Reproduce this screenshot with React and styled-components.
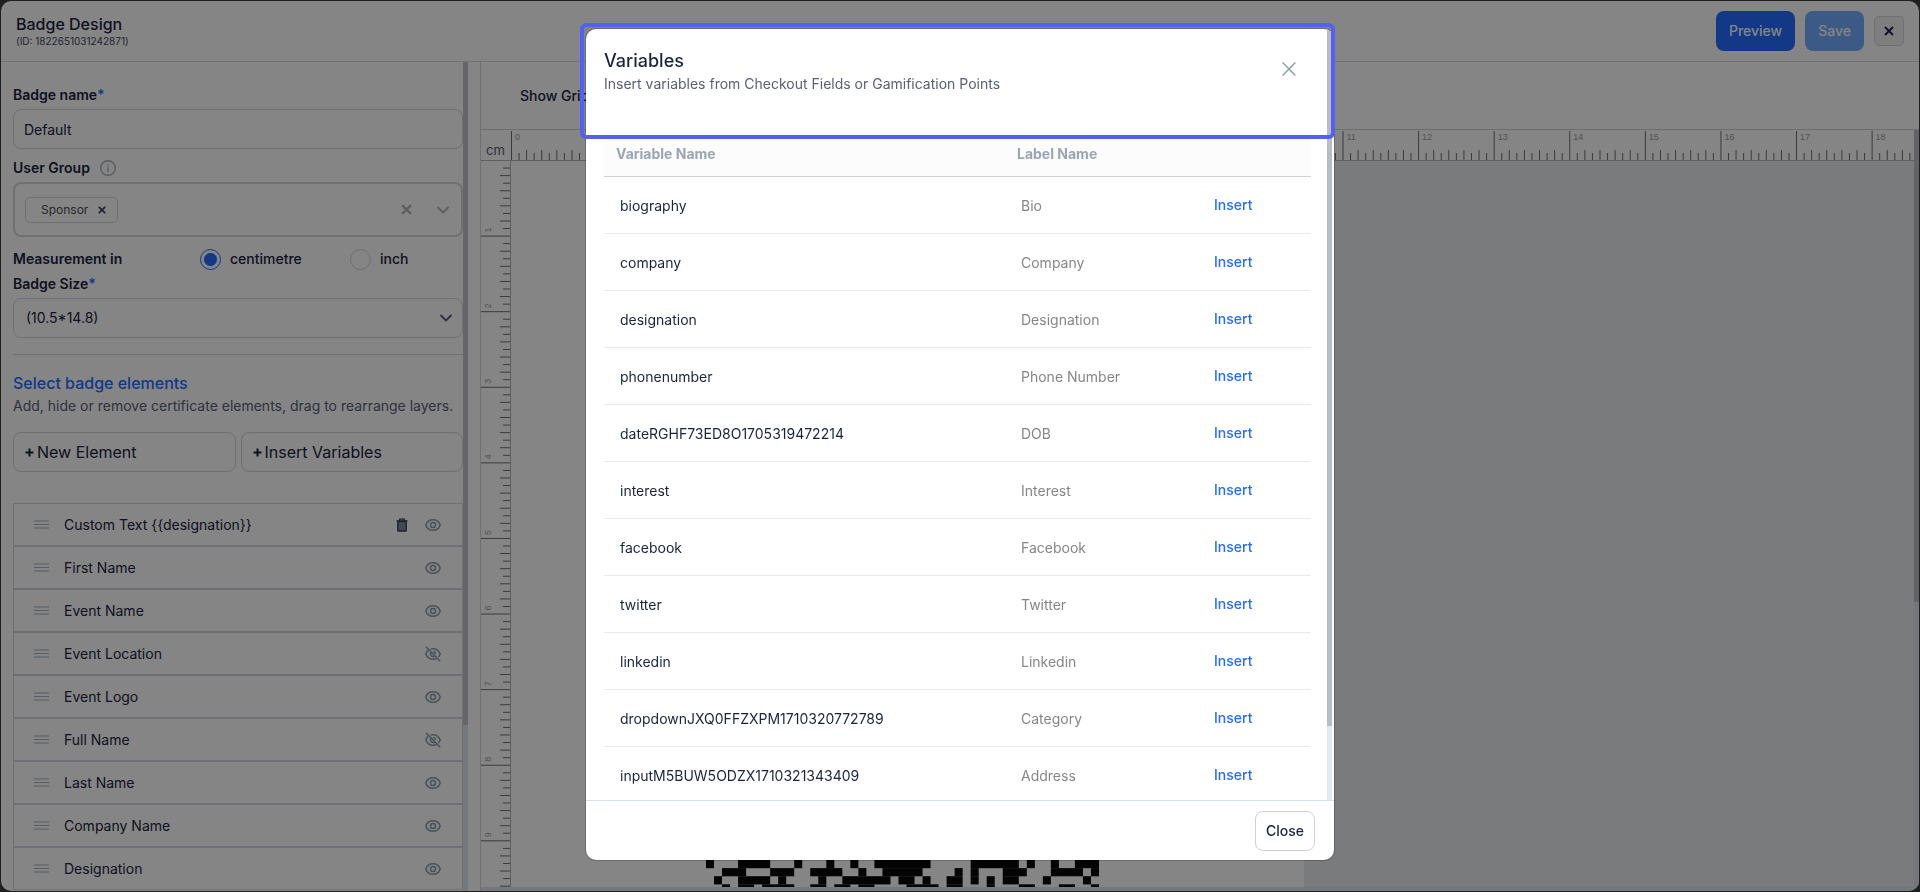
import React from 'react'
import styled, { createGlobalStyle, css } from 'styled-components'

const variables = [
  { name: 'biography', label: 'Bio' },
  { name: 'company', label: 'Company' },
  { name: 'designation', label: 'Designation' },
  { name: 'phonenumber', label: 'Phone Number' },
  { name: 'dateRGHF73ED8O1705319472214', label: 'DOB' },
  { name: 'interest', label: 'Interest' },
  { name: 'facebook', label: 'Facebook' },
  { name: 'twitter', label: 'Twitter' },
  { name: 'linkedin', label: 'Linkedin' },
  { name: 'dropdownJXQ0FFZXPM1710320772789', label: 'Category' },
  { name: 'inputM5BUW5ODZX1710321343409', label: 'Address' },
]

const layers = [
  { name: 'Custom Text {{designation}}', removable: true },
  { name: 'First Name' },
  { name: 'Event Name' },
  { name: 'Event Location', hidden: true },
  { name: 'Event Logo' },
  { name: 'Full Name', hidden: true },
  { name: 'Last Name' },
  { name: 'Company Name' },
  { name: 'Designation' },
]

// one cm on screen
const CM = 75.59

// dark runs of each qr row, as [start, end] in modules
const qrRows = [
  [[0, 1], [4, 8], [11, 12], [15, 16], [18, 19], [21, 28], [33, 39], [40, 41], [43, 44], [46, 49]],
  [[2, 5], [8, 11], [13, 17], [19, 20], [22, 27], [31, 32], [33, 34], [37, 40], [43, 47], [48, 49]],
  [[1, 2], [4, 8], [9, 10], [14, 15], [17, 23], [24, 26], [27, 28], [30, 32], [33, 34], [35, 36], [37, 39], [42, 43], [47, 48]],
  [[2, 3], [4, 6], [7, 11], [13, 15], [16, 18], [19, 21], [25, 29], [30, 32], [35, 36], [39, 41], [44, 46], [48, 49]],
]

const Cross = ({ size = 10, width = 2 }) => (
  <svg width={size} height={size} viewBox="0 0 10 10" fill="none" stroke="currentColor" strokeWidth={width} aria-hidden="true">
    <path d="M1 1L9 9M9 1L1 9" />
  </svg>
)

const Chevron = ({ width = 2 }) => (
  <svg width="14" height="10" viewBox="0 0 14 10" fill="none" stroke="currentColor" strokeWidth={width} strokeLinecap="round" aria-hidden="true">
    <path d="M2 2.5L7 7.5L12 2.5" />
  </svg>
)

const Plus = () => (
  <svg width="9" height="9" viewBox="0 0 9 9" stroke="currentColor" strokeWidth="2" aria-hidden="true">
    <path d="M4.5 0.5V8.5M0.5 4.5H8.5" />
  </svg>
)

const Eye = () => (
  <svg width="16" height="16" viewBox="0 0 16 16" fill="none" stroke="currentColor" strokeWidth="1.5" aria-hidden="true">
    <path d="M0.8 8C1.8 4.700 4.600 2.700 8 2.700S14.200 4.700 15.200 8C14.200 11.300 11.400 13.300 8 13.300S1.800 11.300 0.800 8Z" />
    <circle cx="8" cy="8" r="2.500" />
  </svg>
)

const EyeOff = () => (
  <svg width="16" height="16" viewBox="0 0 16 16" fill="none" stroke="currentColor" strokeWidth="1.5" aria-hidden="true">
    <path d="M1 0.700L15.200 15.200" />
    <path d="M3.300 4.200C2.200 5.100 1.300 6.500 0.800 8C2.100 11.300 4.800 13.300 8 13.300C9.400 13.300 10.600 13 11.700 12.400" />
    <path d="M5.600 3.100C6.300 2.800 7.200 2.700 8 2.700C11.200 2.700 13.900 4.700 15.200 8C14.800 9.200 14.100 10.200 13.300 11" />
    <path d="M6.200 6.200C5.200 7.300 5.400 8.800 6.300 9.700C7.200 10.500 8.600 10.700 9.700 9.800M8.200 5.500C9.500 5.600 10.400 6.500 10.500 7.800" />
  </svg>
)

const Trash = () => (
  <svg width="12" height="14" viewBox="0 0 12 14" fill="none" aria-hidden="true">
    <path d="M0.500 2.800H11.500M3.700 2.500V1.200H8.300V2.500" stroke="#3b4258" strokeWidth="1.300" />
    <path d="M1.800 3.500H10.200V12.200Q10.200 13 9.400 13H2.600Q1.800 13 1.800 12.200Z" fill="#848ca0" stroke="#3b4258" strokeWidth="1.400" />
  </svg>
)

const Handle = () => (
  <svg width="15" height="9" viewBox="0 0 15 9" stroke="#a9b1bf" aria-hidden="true">
    <path d="M0 1H15M0 4.500H15M0 8H15" />
  </svg>
)

const Info = () => (
  <svg width="16" height="16" viewBox="0 0 16 16" fill="none" stroke="#a5b0c0" aria-hidden="true">
    <circle cx="8" cy="8" r="7.300" strokeWidth="1.400" />
    <path d="M8 7V12M8 4V5.500" strokeWidth="1.300" />
  </svg>
)

const HorizontalRuler = () => {
  const ticks = Array.from({ length: 190 }, (_, i) => i)
  return (
    <TopRuler height="30">
      {ticks.map(i => {
        const x = (i * CM) / 10 + 0.5
        const top = i % 10 === 0 ? 1 : i % 2 === 0 ? 20 : 23
        return <line key={i} x1={x} x2={x} y1={top} y2="30" />
      })}
      {ticks.filter(i => i % 10 === 0).map(i => (
        <text key={i} x={(i * CM) / 10 + 4} y="10">{i / 10}</text>
      ))}
    </TopRuler>
  )
}

const VerticalRuler = () => {
  const ticks = Array.from({ length: 99 }, (_, i) => i + 1)
  return (
    <SideRuler width="29">
      {ticks.map(i => {
        const y = (i * CM) / 10 - 0.5
        const left = i % 10 === 0 ? 0 : i % 2 === 0 ? 19 : 22
        return <line key={i} x1={left} x2="29" y1={y} y2={y} />
      })}
      {ticks.filter(i => i % 10 === 0).map(i => (
        <text key={i} transform={`translate(10 ${(i * CM) / 10 - 4}) rotate(-90)`}>{i / 10}</text>
      ))}
    </SideRuler>
  )
}

const QrCode = () => (
  <Qr width="393" height="27" viewBox="0 0 393 27" role="img" aria-label="QR code">
    {qrRows.map((row, y) =>
      row.map(([start, end]) => (
        <rect key={`${y}-${start}`} x={start * 8.02} y={y * 8.1} width={(end - start) * 8.02} height="8.2" />
      ))
    )}
  </Qr>
)

const App = () => {
  return (
    <>
      <GlobalStyle />
      <Page>
        <Header>
          <div>
            <PageTitle>Badge Design</PageTitle>
            <PageId>(ID: 1822651031242871)</PageId>
          </div>
          <HeaderActions>
            <SolidButton>Preview</SolidButton>
            <SolidButton $muted>Save</SolidButton>
            <CloseEditor aria-label="Close editor"><Cross size={10} width={1.8} /></CloseEditor>
          </HeaderActions>
        </Header>
        <Main>
          <Sidebar>
            <SidebarContent>
              <Label htmlFor="badge-name">Badge name<Star>*</Star></Label>
              <TextInput id="badge-name" defaultValue="Default" />
              <GroupLabel id="user-group">User Group <Info /></GroupLabel>
              <MultiSelect role="group" aria-labelledby="user-group">
                <Tag>
                  Sponsor
                  <IconButton aria-label="Remove Sponsor" $color="#3b4258"><Cross size={8} width={2.2} /></IconButton>
                </Tag>
                <SelectTools>
                  <IconButton aria-label="Clear all"><Cross size={11} /></IconButton>
                  <IconButton aria-label="Open list"><Chevron /></IconButton>
                </SelectTools>
              </MultiSelect>
              <Measurement role="radiogroup" aria-labelledby="measurement">
                <MeasurementTitle id="measurement">Measurement in</MeasurementTitle>
                <RadioLabel><Radio type="radio" name="unit" defaultChecked />centimetre</RadioLabel>
                <RadioLabel><Radio type="radio" name="unit" />inch</RadioLabel>
              </Measurement>
              <Label htmlFor="badge-size">Badge Size<Star>*</Star></Label>
              <SelectWrap>
                <Select id="badge-size" defaultValue="a6">
                  <option value="a6">(10.5*14.8)</option>
                </Select>
                <SelectArrow><Chevron width={1.8} /></SelectArrow>
              </SelectWrap>
              <Divider />
              <SectionTitle>Select badge elements</SectionTitle>
              <SectionText>Add, hide or remove certificate elements, drag to rearrange layers.</SectionText>
              <AddButtons>
                <AddButton><Plus />New Element</AddButton>
                <AddButton><Plus />Insert Variables</AddButton>
              </AddButtons>
              <Layers>
                {layers.map(layer => (
                  <Layer key={layer.name}>
                    <Handle />
                    <LayerName>{layer.name}</LayerName>
                    <LayerActions>
                      {layer.removable && <IconButton aria-label="Delete"><Trash /></IconButton>}
                      <IconButton aria-label="Toggle visibility" $color="#8f99a8">
                        {layer.hidden ? <EyeOff /> : <Eye />}
                      </IconButton>
                    </LayerActions>
                  </Layer>
                ))}
              </Layers>
            </SidebarContent>
            <Scroll $track="#dce4f1"><Thumb $color="#c1c3cb" $size="80%" /></Scroll>
          </Sidebar>
          <Workspace>
            <Toolbar>Show Grid</Toolbar>
            <Board>
              <BoardMain>
                <RulerRow>
                  <Unit>cm</Unit>
                  <HorizontalRuler />
                </RulerRow>
                <CanvasRow>
                  <VerticalRuler />
                  <Canvas>
                    <Paper><QrCode /></Paper>
                  </Canvas>
                </CanvasRow>
                <BottomScroll />
              </BoardMain>
              <Scroll $track="#e2e3ee"><Thumb $color="#bdbec3" $size="62%" /></Scroll>
            </Board>
          </Workspace>
        </Main>
      </Page>
      <Overlay>
        <Modal role="dialog" aria-modal="true" aria-labelledby="modal-title">
          <ModalBody>
            <ModalContent>
              <ModalHeader>
                <div>
                  <ModalTitle id="modal-title">Variables</ModalTitle>
                  <ModalText>Insert variables from Checkout Fields or Gamification Points</ModalText>
                </div>
                <ModalClose aria-label="Close dialog"><Cross size={16} width={0.9} /></ModalClose>
              </ModalHeader>
              <Table>
                <thead>
                  <tr>
                    <HeadCell>Variable Name</HeadCell>
                    <HeadCell $width="193px">Label Name</HeadCell>
                    <HeadCell $width="113px" aria-label="Action" />
                  </tr>
                </thead>
                <tbody>
                  {variables.map(variable => (
                    <tr key={variable.name}>
                      <Cell>{variable.name}</Cell>
                      <Cell $muted>{variable.label}</Cell>
                      <ActionCell><InsertButton>Insert</InsertButton></ActionCell>
                    </tr>
                  ))}
                </tbody>
              </Table>
            </ModalContent>
            <Scroll $track="#e1eaf2"><Thumb $color="#b6bdc5" $size="calc(100% - 74px)" /></Scroll>
          </ModalBody>
          <ModalFooter>
            <OutlineButton>Close</OutlineButton>
          </ModalFooter>
          <Highlight />
        </Modal>
      </Overlay>
    </>
  )
}

const GlobalStyle = createGlobalStyle`
  * {
    box-sizing: border-box;
  }
  body {
    margin: 0;
    overflow: hidden;
    background: #3c3c3e;
    color: #1b2340;
    font-family: Inter, "Liberation Sans", sans-serif;
    font-size: 14px;
    line-height: 20px;
  }
  button, input, select {
    font: inherit;
    color: inherit;
    margin: 0;
  }
  button {
    padding: 0;
    border: 0;
    background: none;
    cursor: pointer;
  }
  h1, h2, p {
    margin: 0;
  }
  svg {
    display: block;
    flex-shrink: 0;
  }
`

const fieldBox = css`
  width: 100%;
  height: 40px;
  border: 1px solid #d4d6df;
  border-radius: 8px;
  background: white;
`

const Page = styled.div`
  display: flex;
  flex-direction: column;
  height: calc(100vh - 2px);
  margin: 1px;
  border-radius: 10px;
  overflow: hidden;
  background: white;
`

const Header = styled.header`
  display: flex;
  align-items: center;
  justify-content: space-between;
  height: 61px;
  flex-shrink: 0;
  padding: 0 15px;
  border-bottom: 1px solid #dcdde2;
`

const PageTitle = styled.h1`
  font-size: 16px;
  font-weight: 500;
  line-height: 20px;
`

const PageId = styled.p`
  font-size: 10px;
  line-height: 14px;
  color: #3f4660;
`

const HeaderActions = styled.div`
  display: flex;
  align-items: center;
  gap: 10px;
`

const SolidButton = styled.button`
  height: 40px;
  padding: 0 13px;
  border-radius: 8px;
  font-weight: 500;
  color: white;
  background: ${props => (props.$muted ? '#74acff' : '#256cff')};
`

const CloseEditor = styled.button`
  display: flex;
  align-items: center;
  justify-content: center;
  width: 30px;
  height: 30px;
  border: 1px solid #d4d6df;
  border-radius: 5px;
  background: #f1f1f3;
`

const Main = styled.div`
  display: flex;
  flex: 1;
  min-height: 0;
`

const Sidebar = styled.aside`
  display: flex;
  width: 467px;
  flex-shrink: 0;
`

const SidebarContent = styled.div`
  flex: 1;
  padding: 23px 0 0 12px;
  overflow: hidden;
`

const Scroll = styled.div`
  width: 5px;
  flex-shrink: 0;
  background: ${props => props.$track};
`

const Thumb = styled.div`
  height: ${props => props.$size};
  background: ${props => props.$color};
`

const Label = styled.label`
  display: block;
  font-weight: 600;
  line-height: 20px;
  margin-bottom: 4px;
`

const GroupLabel = styled.div`
  display: flex;
  align-items: center;
  gap: 10px;
  margin: 9px 0 4px;
  font-weight: 600;
`

const Star = styled.span`
  color: #256cff;
`

const TextInput = styled.input`
  ${fieldBox}
  display: block;
  padding: 0 10px;
`

const MultiSelect = styled.div`
  display: flex;
  align-items: center;
  justify-content: space-between;
  height: 55px;
  padding: 0 11px 0 10px;
  border: 2px solid #d4d6d8;
  border-radius: 8px;
`

const Tag = styled.span`
  display: flex;
  align-items: center;
  gap: 10px;
  height: 26px;
  padding: 0 11px 0 15px;
  border: 1px solid #d4d6df;
  border-radius: 5px;
  font-size: 12px;
  color: #4c4c55;
`

const IconButton = styled.button`
  display: flex;
  color: ${props => props.$color || '#b4b6bb'};
`

const SelectTools = styled.div`
  display: flex;
  align-items: center;
  gap: 24px;
`

const Measurement = styled.div`
  display: grid;
  grid-template-columns: 187px 150px 1fr;
  align-items: center;
  height: 22px;
  margin: 11px 0 4px;
`

const MeasurementTitle = styled.span`
  font-weight: 600;
`

const RadioLabel = styled.label`
  display: flex;
  align-items: center;
  gap: 9px;
  font-weight: 500;
`

const Radio = styled.input`
  appearance: none;
  width: 21px;
  height: 21px;
  border: 1px solid #d4d6df;
  border-radius: 50%;
  background: white;

  &:checked {
    border-color: #256cff;
    background: radial-gradient(circle, #256cff 6px, transparent 7px);
  }
`

const SelectWrap = styled.div`
  position: relative;
`

const Select = styled.select`
  ${fieldBox}
  display: block;
  appearance: none;
  padding: 0 12px;
`

const SelectArrow = styled.span`
  position: absolute;
  top: 15px;
  right: 10px;
  color: #565d73;
  pointer-events: none;
`

const Divider = styled.hr`
  margin: 16px 0 17px;
  border: 0;
  border-top: 1px solid #d4d6d8;
`

const SectionTitle = styled.h2`
  margin-bottom: 1px;
  font-size: 16px;
  font-weight: 500;
  line-height: 22px;
  color: #256cff;
`

const SectionText = styled.p`
  line-height: 22px;
  color: #5a6075;
  white-space: nowrap;
`

const AddButtons = styled.div`
  display: grid;
  grid-template-columns: 1fr 1fr;
  gap: 5px;
  margin: 15px 0 31px;
`

const AddButton = styled.button`
  ${fieldBox}
  display: flex;
  align-items: center;
  gap: 3px;
  padding: 0 11px;
  font-size: 16px;
`

const Layers = styled.ul`
  margin: 0;
  padding: 0;
  list-style: none;
`

const Layer = styled.li`
  display: flex;
  align-items: center;
  gap: 15px;
  height: 43px;
  padding: 0 21px 0 20px;
  border: 1px solid #d4d6df;
`

const LayerName = styled.span`
  flex: 1;
`

const LayerActions = styled.div`
  display: flex;
  align-items: center;
  gap: 17px;
`

const Workspace = styled.main`
  display: flex;
  flex-direction: column;
  flex: 1;
  min-width: 0;
  margin-left: 12px;
  border-left: 1px solid #d4d6df;
`

const Toolbar = styled.div`
  display: flex;
  align-items: center;
  height: 68px;
  flex-shrink: 0;
  padding: 0 39px;
  border-bottom: 1px solid #d0d1d6;
  font-weight: 500;
`

const Board = styled.div`
  display: flex;
  flex: 1;
  min-height: 0;
`

const BoardMain = styled.div`
  display: flex;
  flex-direction: column;
  flex: 1;
  min-width: 0;
`

const RulerRow = styled.div`
  display: flex;
  height: 31px;
  flex-shrink: 0;
  border-bottom: 1px solid #b8b8b8;
`

const Unit = styled.span`
  width: 30px;
  flex-shrink: 0;
  padding: 10px 0 0 5px;
  font-size: 13px;
  color: #5a6075;
`

const rulerMarks = css`
  line {
    stroke: #707070;
  }
  text {
    font-family: "Liberation Sans", sans-serif;
    font-size: 9px;
    fill: #9c9ea6;
  }
`

const TopRuler = styled.svg`
  ${rulerMarks}
  flex: 1;
  min-width: 0;
`

const SideRuler = styled.svg`
  ${rulerMarks}
  height: 100%;
  border-right: 1px solid #b8b8b8;
  box-sizing: content-box;
`

const CanvasRow = styled.div`
  display: flex;
  flex: 1;
  min-height: 0;
`

const Canvas = styled.div`
  flex: 1;
  min-width: 0;
  background: #eaebef;
`

const Paper = styled.div`
  display: flex;
  flex-direction: column;
  align-items: flex-start;
  justify-content: flex-end;
  width: 793px;
  height: 100%;
  padding-left: 195px;
  background: white;
`

const Qr = styled.svg`
  fill: #080808;
`

const BottomScroll = styled.div`
  height: 4px;
  flex-shrink: 0;
  background: #dce4f1;
`

const Overlay = styled.div`
  position: fixed;
  inset: 0;
  display: flex;
  justify-content: center;
  padding: 29px 0 32px;
  background: rgba(0, 0, 0, 0.48);
`

const Modal = styled.div`
  position: relative;
  display: flex;
  flex-direction: column;
  width: 748px;
  max-width: 100%;
  border-radius: 10px;
  background: white;
  box-shadow: 0 0 0 1px rgba(0, 0, 0, 0.2);
`

const ModalBody = styled.div`
  display: flex;
  flex: 1;
  min-height: 0;
  padding-right: 2px;
  border-radius: 10px 10px 0 0;
  overflow: hidden;
`

const ModalContent = styled.div`
  flex: 1;
  overflow: hidden;
  padding: 0 16px 0 18px;
`

const ModalHeader = styled.div`
  display: flex;
  justify-content: space-between;
  height: 102px;
  padding: 20px 14px 0 0;
`

const ModalTitle = styled.h2`
  font-size: 18px;
  font-weight: 500;
  line-height: 24px;
`

const ModalText = styled.p`
  line-height: 22px;
  color: #5a6075;
`

const ModalClose = styled.button`
  display: flex;
  align-items: center;
  height: 40px;
  color: #8f9bac;
`

const Table = styled.table`
  width: 100%;
  table-layout: fixed;
  border-collapse: separate;
  border-spacing: 0;
  text-align: left;
`

const HeadCell = styled.th`
  width: ${props => props.$width || 'auto'};
  height: 46px;
  padding: 0 12px;
  border-bottom: 1px solid #ccd1dc;
  background: #fcfcfc;
  font-weight: 700;
  color: #9aa5b4;
`

const Cell = styled.td`
  height: 57px;
  padding: 2px 16px 0;
  border-bottom: 1px solid #e8e9ec;
  color: ${props => (props.$muted ? '#868686' : 'inherit')};
`

const ActionCell = styled(Cell)`
  padding: 0 16px;
`

const InsertButton = styled.button`
  font-weight: 500;
  color: #256cff;
`

const ModalFooter = styled.div`
  display: flex;
  align-items: center;
  justify-content: flex-end;
  height: 60px;
  flex-shrink: 0;
  padding: 0 19px;
  border-top: 1px solid #d9e2ec;
`

const OutlineButton = styled.button`
  height: 40px;
  padding: 0 10px;
  border: 1px solid #cdd0db;
  border-radius: 8px;
  font-weight: 500;
`

// focus frame around the dialog header
const Highlight = styled.div`
  position: absolute;
  top: -6px;
  left: -6px;
  right: -1px;
  height: 116px;
  border: 4px solid #5461f0;
  border-radius: 6px;
  pointer-events: none;
`

export default App
